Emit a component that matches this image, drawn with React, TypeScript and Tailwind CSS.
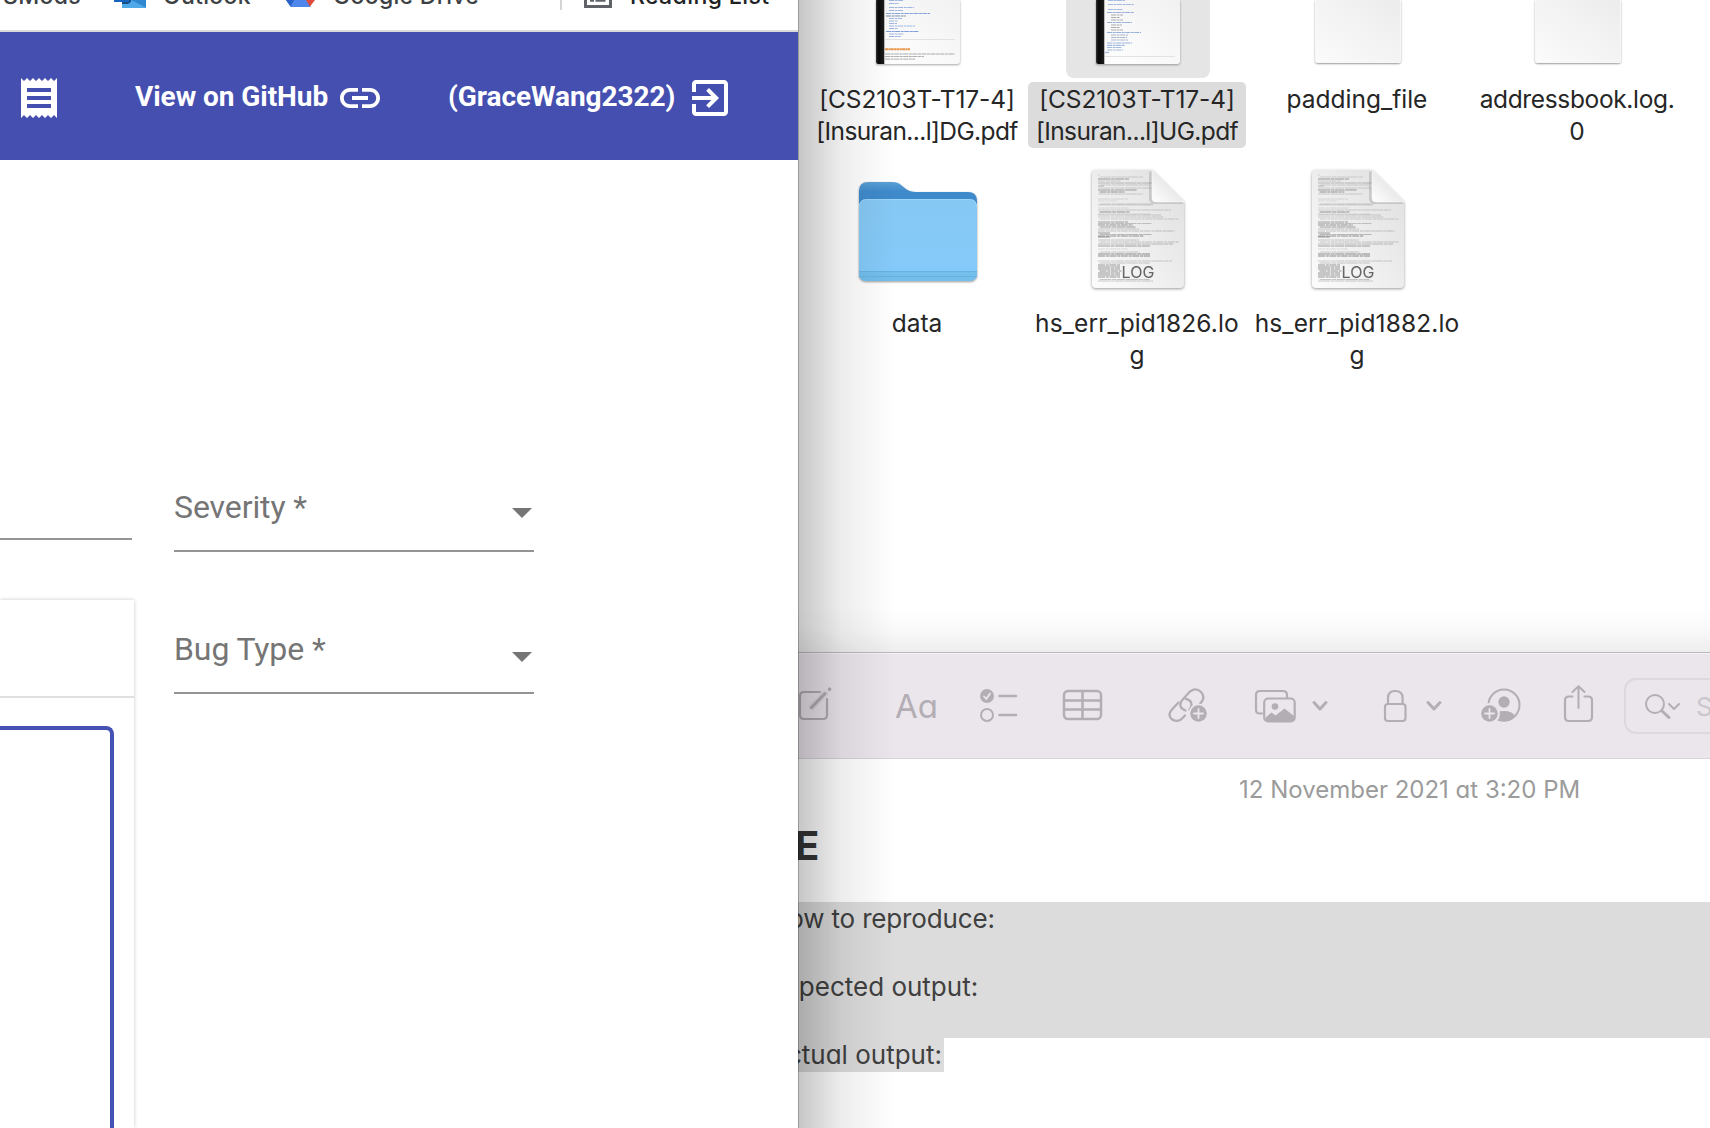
import type { ReactNode } from "react";

/* ---------- browser window ---------- */

function MaterialIcon({ d }: { d: string }) {
  return (
    <svg viewBox="0 0 24 24" className="size-12 shrink-0 fill-white">
      <path d={d} />
    </svg>
  );
}

const RECEIPT =
  "M18 17H6v-2h12v2zm0-4H6v-2h12v2zm0-4H6V7h12v2zM3 22l1.5-1.5L6 22l1.5-1.5L9 22l1.5-1.5L12 22l1.5-1.5L15 22l1.5-1.5L18 22l1.5-1.5L21 22V2l-1.5 1.5L18 2l-1.5 1.5L15 2l-1.5 1.5L12 2l-1.5 1.5L9 2 7.5 3.5 6 2 4.5 3.5 3 2v20z";
const LINK =
  "M3.9 12c0-1.71 1.39-3.1 3.1-3.1h4V7H7c-2.76 0-5 2.24-5 5s2.24 5 5 5h4v-1.9H7c-1.71 0-3.1-1.39-3.1-3.1zM8 13h8v-2H8v2zm9-6h-4v1.9h4c1.71 0 3.1 1.39 3.1 3.1s-1.39 3.1-3.1 3.1h-4V17h4c2.76 0 5-2.24 5-5s-2.24-5-5-5z";
const EXIT =
  "M10.09 15.59L11.5 17l5-5-5-5-1.41 1.41L12.67 11H3v2h9.67l-2.58 2.59zM19 3H5c-1.11 0-2 .9-2 2v4h2V5h14v14H5v-4H3v4c0 1.1.89 2 2 2h14c1.1 0 2-.9 2-2V5c0-1.1-.9-2-2-2z";

function BookmarksBar() {
  return (
    <div className="flex h-8 items-start overflow-hidden border-b-2 border-[#dadada] font-['Inter'] text-[23px] leading-[30px] font-medium whitespace-nowrap text-[#3c4043]">
      <span className="-mt-[19px] ml-[3px] w-[111px] tracking-[0.3px]">SMods</span>
      <svg viewBox="0 0 32 8" className="h-2 w-8 shrink-0">
        <path d="M8 0h24v8H8z" fill="#3f9be0" />
        <path d="M8 8 32 8 32 6.5 18 0 8 4z" fill="#50a9e8" />
        <path d="M17 0 32 7.6V0z" fill="#2f87cf" />
        <path d="M8 0h9v2l-3 2H8z" fill="#174f86" />
        <path d="M0 0h15v2H0z" fill="#1565c0" />
      </svg>
      <span className="-mt-[19px] ml-[17px] w-[123px] tracking-[0.3px]">Outlook</span>
      <svg viewBox="0 0 29 7" className="h-[7px] w-[29px] shrink-0">
        <path d="M0 0h9L5 7z" fill="#2a62c9" />
        <path d="M8 0h13l4 6-1 1H5L4 6z" fill="#4f86ec" />
        <path d="M0 0h8L4.500 6.500z" fill="#2a62c9" />
        <path d="M20 0h9l-5 6.500z" fill="#de4b3c" />
      </svg>
      <span className="-mt-[19px] ml-[18px] w-[227px] tracking-[0.3px]">Google Drive</span>
      <div className="h-[10px] w-[2px] bg-[#d5d5d5]" />
      <svg viewBox="0 0 28 8" className="ml-[22px] h-2 w-7 shrink-0" fill="none" stroke="#5f6368">
        <path d="M1.500 0v6.500h25V0" strokeWidth="3" />
        <path d="M6 .5h4M11.500 .5h10" strokeWidth="2.500" />
      </svg>
      <span className="-mt-[19px] ml-[18px] tracking-[0.4px] text-[#202124]">Reading List</span>
    </div>
  );
}

function Header() {
  return (
    <header className="flex h-32 items-center bg-[#454fb0] pt-1 pl-[15px] font-['Roboto'] text-[28px] font-bold whitespace-nowrap text-white">
      <MaterialIcon d={RECEIPT} />
      <span className="-mt-[3px] ml-[72px] w-[197px] tracking-[-0.06px]">View on GitHub</span>
      <div className="ml-1">
        <MaterialIcon d={LINK} />
      </div>
      <span className="-mt-[3px] ml-16 w-[226px] tracking-[-0.06px]">(GraceWang2322)</span>
      <div className="ml-3">
        <MaterialIcon d={EXIT} />
      </div>
    </header>
  );
}

function Select({ label, arrow }: { label: string; arrow: string }) {
  return (
    <div className="flex h-[70px] w-[360px] items-start justify-between border-b-2 border-[#949494] pr-[2px]">
      <span className="text-[32px] leading-[50px] tracking-[-0.1px] whitespace-nowrap">{label}</span>
      <svg viewBox="0 0 20 10" className={`${arrow} h-[10px] w-5 fill-[#757575]`}>
        <path d="M0 0h20L10 10z" />
      </svg>
    </div>
  );
}

function Browser() {
  return (
    <section className="flex w-[798px] shrink-0 flex-col bg-white">
      <BookmarksBar />
      <Header />
      <div className="flex flex-1 font-['Roboto'] text-[#757575]">
        <div className="flex w-[134px] shrink-0 flex-col">
          <div className="h-[380px] w-[132px] border-b-2 border-[#949494]" />
          <div className="mt-[60px] flex flex-1 flex-col shadow-[0_0_4px_rgba(0,0,0,0.22)]">
            <div className="h-[98px] border-b-2 border-[#e0e0e0]" />
            <div className="mt-7 mr-5 flex-1 rounded-tr-lg border-t-4 border-r-4 border-[#4551b3]" />
          </div>
        </div>
        <div className="flex flex-col pt-[322px] pl-10">
          <Select label="Severity *" arrow="mt-[26px]" />
          <div className="h-[72px]" />
          <Select label="Bug Type *" arrow="mt-7" />
        </div>
      </div>
    </section>
  );
}

/* ---------- Finder window ---------- */

function PdfIcon({ variant }: { variant: "dg" | "ug" }) {
  const dg: [number, number, number, string][] = [
    [13, 0, 14, "#9fb7e0"], [13, 3, 10, "#9fb7e0"], [13, 7, 25, "#9fb7e0"], [13, 10, 14, "#9fb7e0"],
    [10, 13, 44, "#86a4d9"], [10, 15.500, 20, "#7890b0"], [13, 18, 13, "#9fb7e0"], [13, 20.500, 9, "#9fb7e0"],
    [13, 23, 8, "#9fb7e0"], [13, 25.500, 26, "#9fb7e0"], [13, 28, 9, "#9fb7e0"], [10, 31, 33, "#7d9ed8"],
    [13, 33.500, 15, "#9fb7e0"], [13, 36, 12, "#9fb7e0"], [9, 53.500, 70, "#aaa"],
    [9, 56, 39, "#b0b0b0"], [9, 58.700, 30, "#bbb"],
  ];
  const ug: [number, number, number, string][] = [
    [12, 0, 17, "#a4b9df"], [12, 4, 26, "#a4b9df"], [12, 9, 15, "#a4b9df"], [11, 12, 27, "#96afdb"],
    [15, 14.500, 12, "#aaa"], [15, 17, 9, "#aaa"], [15, 19.500, 12, "#aaa"], [11, 22, 25, "#96afdb"],
    [15, 24.500, 11, "#aaa"], [15, 27, 9, "#aaa"], [15, 29.500, 12, "#aaa"], [11, 32, 34, "#96afdb"],
    [15, 34.500, 17, "#a9b5ca"], [15, 37, 16, "#a9b5ca"], [15, 39.500, 17, "#a9b5ca"], [11, 42.500, 25, "#96afdb"],
    [11, 44.800, 18, "#a4b9df"], [11, 47, 15, "#a4b9df"], [11, 49.500, 16, "#a4b9df"], [9, 52, 4, "#a4b9df"],
  ];
  return (
    <svg viewBox="0 0 92 72" className="h-[72px] w-[92px] drop-shadow-[0_1px_1px_rgba(0,0,0,0.35)]">
      <defs>
        <linearGradient id={`page-${variant}`} x1="0" x2="1" y1="1" y2="0">
          <stop offset="0" stopColor="#fff" />
          <stop offset="1" stopColor="#f1f1f1" />
        </linearGradient>
        <linearGradient id={`spine-${variant}`}>
          <stop offset="0" stopColor="#333" />
          <stop offset=".3" stopColor="#080808" />
          <stop offset="1" stopColor="#1c1c1c" />
        </linearGradient>
      </defs>
      <path d="M4 0h84v61q0 3-3 3H6q-2 0-2-2z" fill={`url(#page-${variant})`} />
      <path d="M4 0h8v64H6q-2 0-2-2z" fill={`url(#spine-${variant})`} />
      <path d="M12.500 0v64" stroke="#bbb" />
      {(variant === "dg" ? dg : ug).map(([x, y, w, color], i) => (
        <path key={i} d={`M${x + 4} ${y + 0.5}h${w}`} stroke={color} strokeWidth="1.200" strokeDasharray="5 .6 3 .5" />
      ))}
      {variant === "dg" && <path d="M13 49.200h25" stroke="#e8954a" strokeWidth="2" strokeDasharray="3 .4 2 .3" />}
      <path d={variant === "dg" ? "M13 39.500h70" : "M13 56.500h70"} stroke="#e2e2e2" />
    </svg>
  );
}

function BlankIcon() {
  return (
    <div className="h-[63px] w-[86px] rounded-b-[3px] border border-t-0 border-[#f7f7f7] bg-linear-to-tr from-[#fbfbfb] to-[#ececec] shadow-[0_1px_2px_rgba(0,0,0,0.4)]" />
  );
}

function FolderIcon() {
  return (
    <svg viewBox="0 0 124 108" className="h-[108px] w-[124px] drop-shadow-[0_1px_1px_rgba(0,0,0,0.4)]">
      <defs>
        <linearGradient id="back" x2="0" y2="1">
          <stop offset="0" stopColor="#5ba0d6" />
          <stop offset=".2" stopColor="#3f8acb" />
        </linearGradient>
        <linearGradient id="front" x2="0" y2="1">
          <stop offset="0" stopColor="#86c8f4" />
          <stop offset="1" stopColor="#84cafa" />
        </linearGradient>
      </defs>
      <path d="M3 12Q3 3 12 3H36Q42 3 45 6L50 10Q54 13 60 13H112Q121 13 121 22V50H3z" fill="url(#back)" />
      <path d="M3 28Q3 20 11 20H113Q121 20 121 28V94Q121 102 113 102H11Q3 102 3 94z" fill="url(#front)" />
      <path d="M3.500 28Q3.500 20.500 11 20.500H113Q120.500 20.500 120.500 28" fill="none" stroke="#9ad4f8" />
      <path d="M3 92H121V94Q121 102 113 102H11Q3 102 3 94z" fill="#74beec" />
      <path d="M3 92.500H121M3 97.500H121" stroke="#67b2e3" />
    </svg>
  );
}

const LOG_ROWS: [number, number, number][] = [
  [6, 2, 0.3], [8, 44, 0.35], [10, 31, 0.7], [12, 23, 0.4], [14, 55, 0.6], [16, 50, 0.4], [17, 6, 0.6],
  [19, 53, 0.4], [21, 39, 0.7], [23, 25, 0.8], [25, 45, 0.4], [30, 30, 0.3], [32, 20, 0.25],
  [35, 54, 0.45], [36, 55, 0.35], [39, 31, 0.3], [41, 73, 0.4], [43, 30, 0.8], [45, 53, 0.3], [46, 63, 0.45],
  [48, 66, 0.4], [50, 79, 0.4], [53, 30, 0.7], [54.500, 54, 0.5], [56, 35, 0.8], [58, 36, 0.7], [60, 41, 0.5],
  [62, 77, 0.5], [64, 12, 0.7], [65.500, 52, 0.6], [67, 46, 0.8], [68, 12, 0.7], [71, 41, 0.5], [73, 79, 0.5],
  [75, 75, 0.6], [77, 52, 0.7], [80, 30, 0.3], [83, 40, 0.5], [85, 52, 0.9], [87, 52, 0.9], [92, 74, 0.45],
  [94, 50, 0.5], [96, 22, 0.8], [98, 22, 0.8], [100, 22, 0.8], [102, 22, 0.8], [104, 22, 0.8], [106, 22, 0.8],
  [108, 22, 0.8], [110.500, 50, 0.5], [112, 55, 0.5],
];

function LogIcon({ id }: { id: string }) {
  return (
    <svg viewBox="0 0 100 126" className="h-[126px] w-[100px] drop-shadow-[0_1px_1.500px_rgba(0,0,0,0.4)]">
      <defs>
        <linearGradient id={`sheet-${id}`} x1="0" x2="1" y1="1" y2="0">
          <stop offset="0" stopColor="#fcfcfc" />
          <stop offset="1" stopColor="#dedede" />
        </linearGradient>
        <linearGradient id={`fold-${id}`} x1="0" x2=".6" y1="1" y2=".4">
          <stop offset="0" stopColor="#fff" />
          <stop offset="1" stopColor="#e6e6e6" />
        </linearGradient>
      </defs>
      <path d="M8 4H64L96 36V118Q96 122 92 122H8Q4 122 4 118V8Q4 4 8 4z" fill={`url(#sheet-${id})`} />
      {LOG_ROWS.map(([y, w, o], i) => (
        <path
          key={i}
          d={`M${10 + (i % 4 === 1 ? 1.5 : 0)} ${y + 3}h${w}`}
          stroke="#444"
          strokeWidth={o > 0.6 ? 1.1 : 0.8}
          strokeDasharray={i % 3 === 0 ? "7 .8 3 .6" : "12 .6 4 .5 9 .6"}
          opacity={o * 0.68}
        />
      ))}
      <path d="M61 6V33Q61 37 66 38H96L92 33 64 5z" fill="#000" opacity=".13" />
      <path d="M64 4 96 36H68Q64 36 64 32z" fill={`url(#fold-${id})`} stroke="#f8f8f8" strokeWidth=".5" />
      <text x="50" y="112" textAnchor="middle" fontFamily="Inter" fontSize="16" fill="#666" stroke="#eee" strokeWidth="1.500" paintOrder="stroke">
        LOG
      </text>
    </svg>
  );
}

function FileItem({
  icon,
  children,
  selected = false,
}: {
  icon: ReactNode;
  children: ReactNode;
  selected?: boolean;
}) {
  return (
    <div className="flex h-[224px] w-[220px] flex-col items-center">
      <div className={`ml-0.5 flex h-36 w-36 items-end justify-center rounded-lg ${selected ? "bg-[#e5e5e5]" : ""}`}>{icon}</div>
      <div className={`mt-1 flex h-[66px] w-[218px] flex-col items-center rounded-[5px] pt-[1px] text-[24.500px] leading-8 whitespace-nowrap ${selected ? "bg-[#dcdcdc]" : ""}`}>
        {children}
      </div>
    </div>
  );
}

function Finder() {
  return (
    <div className="relative h-[653px] overflow-hidden bg-white pl-[9px] font-['Inter'] text-[#262626]">
      <div className="-mt-[66px] grid w-[880px] grid-cols-4">
        <FileItem icon={<div className="mb-[6px]"><PdfIcon variant="dg" /></div>}>
          <span className="tracking-[-0.1px]">[CS2103T-T17-4]</span>
          <span className="tracking-[-0.6px]">[Insuran...l]DG.pdf</span>
        </FileItem>
        <FileItem selected icon={<div className="mb-[6px]"><PdfIcon variant="ug" /></div>}>
          <span className="tracking-[-0.1px]">[CS2103T-T17-4]</span>
          <span className="tracking-[-0.6px]">[Insuran...l]UG.pdf</span>
        </FileItem>
        <FileItem icon={<div className="mb-[15px]"><BlankIcon /></div>}>
          <span>padding_file</span>
        </FileItem>
        <FileItem icon={<div className="mb-[15px]"><BlankIcon /></div>}>
          <span className="tracking-[-0.35px]">addressbook.log.</span>
          <span>0</span>
        </FileItem>
        <FileItem icon={<div className="mb-[15px]"><FolderIcon /></div>}>
          <span>data</span>
        </FileItem>
        <FileItem icon={<div className="mb-[10px]"><LogIcon id="a" /></div>}>
          <span className="tracking-[0.12px]">hs_err_pid1826.lo</span>
          <span>g</span>
        </FileItem>
        <FileItem icon={<div className="mb-[10px]"><LogIcon id="b" /></div>}>
          <span className="tracking-[0.12px]">hs_err_pid1882.lo</span>
          <span>g</span>
        </FileItem>
      </div>
      <div className="absolute inset-x-0 bottom-0 h-12 border-b border-[#b9b9b9] bg-linear-to-b from-transparent via-black/2 via-50% to-black/7" />
    </div>
  );
}

/* ---------- Notes window ---------- */

/* Toolbar glyphs share a 48px-high box that spans y 682 to 730. */
function Glyph({ x, w, className, children }: { x: number; w: number; className: string; children: ReactNode }) {
  return (
    <svg
      viewBox={`${x} 682 ${w} 48`}
      className={`h-12 shrink-0 ${className}`}
      fill="none"
      stroke="#b3adb4"
      strokeWidth="2.500"
      strokeLinecap="round"
      strokeLinejoin="round"
    >
      {children}
    </svg>
  );
}

function NotesToolbar() {
  return (
    <div className="flex h-[106px] items-center border-t border-b border-t-[#f6f3f6] border-b-[#d6d4d6] bg-[#ebe6ec]">
      <Glyph x={798} w={36} className="w-9">
        <path d="M820 692h-16q-4 0-4 4v19q0 4 4 4h19q4 0 4-4v-16" strokeWidth="2.200" />
        <path d="M812 707l13-13.500" stroke="#e0dbe1" strokeWidth="6.500" />
        <path d="M811.500 707.500l13.500-14" strokeWidth="3" />
        <path d="M829.500 689.300l.1-.1" strokeWidth="3.500" />
      </Glyph>
      <span className="ml-[61px] w-[42px] font-['Inter'] text-[33px] leading-[48px] text-[#b3adb4] [font-feature-settings:'cv11']">Aa</span>
      <Glyph x={978} w={42} className="ml-[41px] w-[42px]">
        <circle cx="987" cy="696" r="7" fill="#b3adb4" stroke="none" />
        <path d="M984 696.500l2.300 2.500 3.700-5.500" stroke="#ebe6ec" strokeWidth="1.700" />
        <circle cx="987" cy="715" r="6" strokeWidth="2" />
        <path d="M999.500 696h16.500M999.500 715h16.500" />
      </Glyph>
      <Glyph x={1062} w={42} className="ml-[42px] w-[42px]">
        <rect x="1064" y="691" width="37" height="28" rx="4" />
        <path d="M1064 700.500h37M1064 709.500h37M1082.500 691v28" />
      </Glyph>
      <Glyph x={1168} w={42} className="ml-16 w-[42px]">
        <path d="M1185.500 710.500q-7-2.500-4.500-8.500 1-2 9-10.500 6-4.500 11 .5 4.500 5 .5 10l-2.500 3" strokeWidth="2.300" />
        <path d="M1178.500 702.500l-7 7.500q-4 5 0 9 4.500 3.500 9.500 .5l4-4" strokeWidth="2.300" />
        <path d="M1186 699q5.500 1 5.500 6 0 2-2 4.500" strokeWidth="2.300" />
        <circle cx="1198.500" cy="713.500" r="10" fill="#ebe6ec" stroke="none" />
        <circle cx="1198.500" cy="713.500" r="8.300" fill="#b3adb4" stroke="none" />
        <path d="M1198.500 709v9M1194 713.500h9" stroke="#ebe6ec" strokeWidth="1.800" />
      </Glyph>
      <Glyph x={1254} w={44} className="ml-11 w-11">
        <path d="M1262 713.500h-2.500q-3.500 0-3.500-4V695q0-4 4-4h23q4 0 4 4v2" strokeWidth="2.200" />
        <rect x="1264.200" y="698.500" width="30.500" height="23" rx="4" strokeWidth="2.200" />
        <circle cx="1275" cy="706.500" r="3.300" fill="#b3adb4" stroke="none" />
        <path d="M1265.500 717.500l6-5 4 3 9-7 9.500 7.500v3q0 3-3 3h-22.500q-3 0-3-3z" fill="#b3adb4" stroke="none" />
      </Glyph>
      <Glyph x={1310} w={20} className="ml-3 w-5">
        <path d="M1314 702.500l6 6.500 6-6.500" strokeWidth="3" />
      </Glyph>
      <Glyph x={1382} w={26} className="ml-[52px] w-[26px]">
        <rect x="1385" y="704" width="20.500" height="17" rx="3" strokeWidth="2.200" />
        <path d="M1388 703.500v-5.500q0-7 7.300-7t7.300 7v5.500" strokeWidth="2.200" />
      </Glyph>
      <Glyph x={1424} w={20} className="ml-4 w-5">
        <path d="M1428 702.500l6 6.500 6-6.500" strokeWidth="3" />
      </Glyph>
      <Glyph x={1480} w={42} className="ml-9 w-[42px]">
        <circle cx="1504" cy="705" r="15.500" strokeWidth="2" />
        <circle cx="1504" cy="702" r="5.700" fill="#b3adb4" stroke="none" />
        <path d="M1493 716.500q2-5.500 11-5.500t11 5.500q-4 5-11 5t-11-5z" fill="#b3adb4" stroke="none" />
        <path d="M1480 703h12v8l8 2v14h-20z" fill="#ebe6ec" stroke="none" opacity="0" />
        <circle cx="1489.500" cy="713.500" r="10.500" fill="#ebe6ec" stroke="none" />
        <circle cx="1489.500" cy="713.500" r="8.300" fill="#b3adb4" stroke="none" />
        <path d="M1489.500 709v9M1485 713.500h9" stroke="#ebe6ec" strokeWidth="1.800" />
      </Glyph>
      <Glyph x={1562} w={34} className="ml-10 w-[34px]">
        <path d="M1572.500 696.500h-3.500q-4 0-4 4v16.500q0 4 4 4h19q4 0 4-4v-16.500q0-4-4-4h-3.500" strokeWidth="2.200" />
        <path d="M1578.500 708v-21M1572.500 692l6-5.800 6 5.800" strokeWidth="2" />
      </Glyph>
      <div className="-mr-4 ml-7 flex h-14 flex-1 items-center overflow-hidden rounded-xl border-2 border-[#ddd8de] font-['Inter']">
        <Glyph x={1642} w={40} className="ml-4 w-10">
          <circle cx="1655" cy="704" r="9" strokeWidth="2" />
          <path d="M1662 711l7 6.500" strokeWidth="3" />
          <path d="M1669 704l5 5 5-5" strokeWidth="2" />
        </Glyph>
        <span className="ml-[14px] text-[26px] text-[#cbc6cc]">Search</span>
      </div>
    </div>
  );
}

function Notes() {
  return (
    <div className="flex flex-1 flex-col overflow-hidden bg-white">
      <NotesToolbar />
      <div className="font-['Inter'] [font-feature-settings:'cv11']">
        <p className="mt-[14px] ml-[441px] text-[24px] leading-[34px] whitespace-nowrap text-[#9b9b9b]">12 November 2021 at 3:20 PM</p>
        <h1 className="-ml-[3px] mt-[15px] h-[47px] text-[40px] leading-[47px] font-bold text-[#363636]">E</h1>
        <div className="mt-[33px] -ml-[29px] text-[26px] leading-[34px] whitespace-nowrap text-[#404040]">
          <p className="h-[68px] bg-[#dcdcdc] tracking-[-0.15px]">How to reproduce:</p>
          <p className="h-[68px] bg-[#dcdcdc]">Expected output:</p>
          <p className="h-[34px] w-[175px] bg-[#dcdcdc]">Actual output:</p>
        </div>
      </div>
    </div>
  );
}

export default function App() {
  return (
    <main className="flex h-[1128px] w-[1710px] overflow-hidden bg-white">
      <Browser />
      <section className="relative flex min-w-0 flex-1 flex-col overflow-hidden">
        <Finder />
        <Notes />
        <div className="pointer-events-none absolute inset-y-0 left-0 w-[96px] border-l border-black/40 bg-linear-to-r from-black/22 via-black/7 via-45% to-transparent" />
      </section>
    </main>
  );
}
